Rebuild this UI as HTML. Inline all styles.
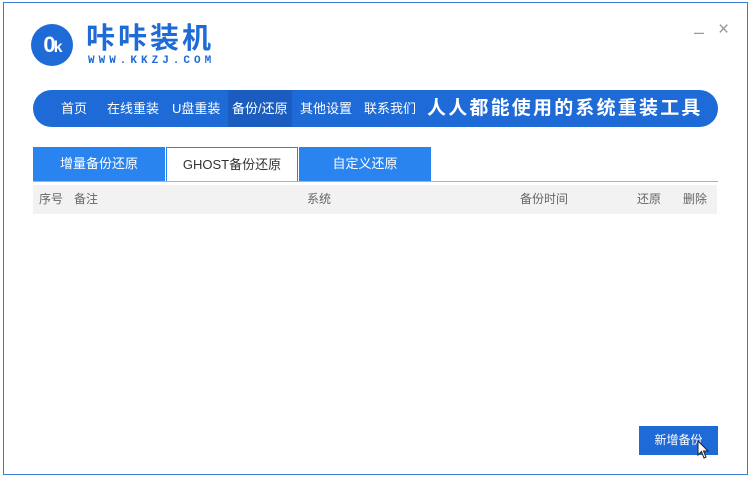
<!DOCTYPE html>
<html><head><meta charset="utf-8"><style>
*{margin:0;padding:0;box-sizing:border-box}
body{width:752px;height:479px;background:#fff;position:relative;overflow:hidden;font-family:"Liberation Sans","Noto Sans CJK SC",sans-serif}
.frame{position:absolute;left:3px;top:2px;width:745px;height:473px;border:1px solid #3a7bd5}
.abs{position:absolute}
.nav{left:33px;top:90px;width:685px;height:37px;background:#1e6ad6;border-radius:19px;color:#fff;font-size:13px}
.nav span{position:absolute;top:0;line-height:37px}
.tab{top:147px;height:34px;line-height:34px;text-align:center;font-size:13px;color:#fff;background:#2a84f0}
.th{position:absolute;top:185px;left:33px;width:684px;height:29px;background:#f2f2f2;color:#666;font-size:12px}
.th span{position:absolute;line-height:29px}
</style></head><body>
<div class="frame"></div>
<div class="abs" style="left:31px;top:24px;width:42px;height:42px;border-radius:50%;background:#1e6ad6;color:#fff;font-size:22px;font-weight:bold;line-height:42px;text-align:center;letter-spacing:-2px">0<span style="font-size:16px">k</span></div>
<div class="abs" style="left:86px;top:20px;font-size:29px;color:#1e6ad6;font-weight:bold;letter-spacing:3px;line-height:38px">咔咔装机</div>
<div class="abs" style="left:88px;top:55px;font-size:11px;color:#1e6ad6;letter-spacing:4px;font-family:'Liberation Mono',monospace;font-weight:bold">WWW.KKZJ.COM</div>
<div class="abs" style="left:694px;top:22px;color:#999;font-size:18px">–</div>
<div class="abs" style="left:718px;top:19px;color:#999;font-size:19px">×</div>
<div class="abs nav">
<span style="left:28px">首页</span>
<span style="left:74px">在线重装</span>
<span style="left:139px">U盘重装</span>
<div class="abs" style="left:195px;top:0;width:64px;height:37px;background:#1a5cbf"></div>
<span style="left:199px">备份/还原</span>
<span style="left:267px">其他设置</span>
<span style="left:331px">联系我们</span>
<span style="left:394px;font-size:19px;font-weight:bold;letter-spacing:2.2px">人人都能使用的系统重装工具</span>
</div>
<div class="abs tab" style="left:33px;width:132px">增量备份还原</div>
<div class="abs tab" style="left:166px;width:132px;background:#fff;color:#333;border:1px solid #2a84f0;border-bottom:none">GHOST备份还原</div>
<div class="abs tab" style="left:299px;width:132px">自定义还原</div>
<div class="abs" style="left:33px;top:181px;width:685px;height:1px;background:#8fb8ee"></div>
<div class="th"><span style="left:6px">序号</span><span style="left:41px">备注</span><span style="left:274px">系统</span><span style="left:487px">备份时间</span><span style="left:604px">还原</span><span style="left:650px">删除</span></div>
<div class="abs" style="left:639px;top:426px;width:79px;height:29px;background:#1e6ad6;color:#fff;font-size:12px;line-height:29px;text-align:center">新增备份</div>
<svg class="abs" style="left:697px;top:440px" width="14" height="20" viewBox="0 0 14 20"><path d="M1 1 L1 15 L4.5 11.5 L7 18 L9 17 L6.5 11 L11 11 Z" fill="#fff" stroke="#222" stroke-width="1"/></svg>
</body></html>
